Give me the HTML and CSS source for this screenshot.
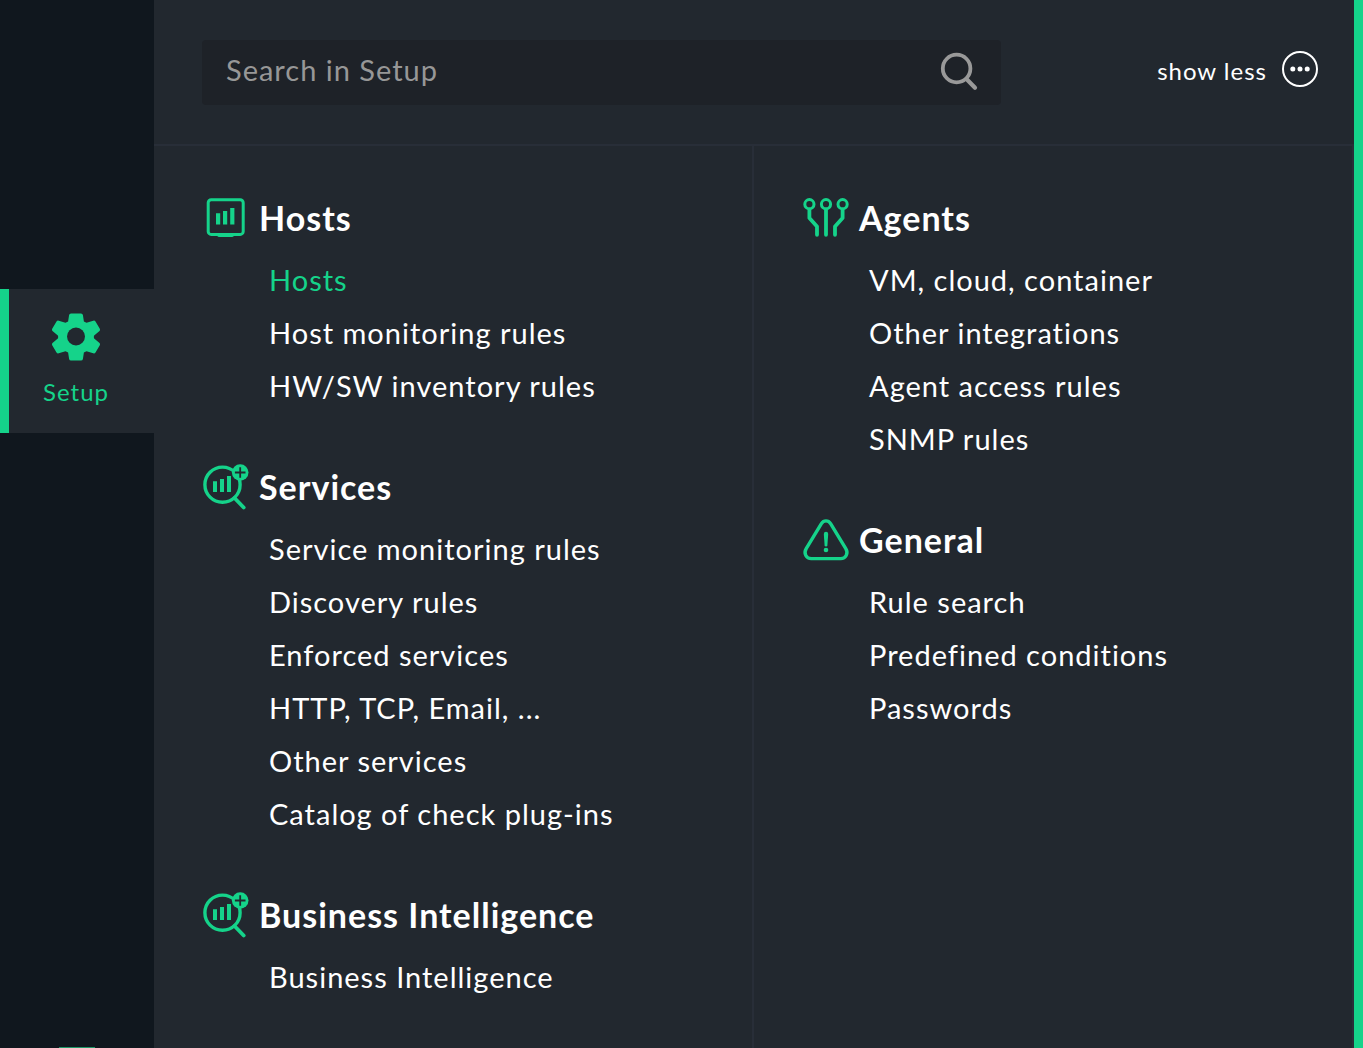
FILE: index.html
```html
<!DOCTYPE html>
<html lang="en">
<head>
<meta charset="utf-8">
<meta name="viewport" content="width=device-width, initial-scale=1">
<title>Setup</title>
<link rel="stylesheet" href="styles.css">
</head>
<body>
<svg class="symbols" aria-hidden="true">
  <symbol id="icon-services" viewBox="0 0 48 48">
    <circle cx="20.500" cy="22.700" r="17.600" fill="none" stroke="currentColor" stroke-width="3.400"/>
    <path d="M32.500 36 41.700 45.500" fill="none" stroke="currentColor" stroke-width="3.800" stroke-linecap="round"/>
    <path d="M11 19.300h4v10.700h-4zM18 17h4v13h-4zM25 14h4v16h-4z" fill="currentColor"/>
    <circle cx="38.200" cy="10.500" r="8.300" fill="currentColor"/>
    <path d="M38.200 5.200v10.600M32.900 10.500h10.600" stroke="#22282f" stroke-width="1.800"/>
  </symbol>
</svg>
<div class="app">
  <nav class="sidebar" aria-label="Main">
    <a class="nav-item" href="#setup" aria-current="page">
      <svg class="nav-icon" viewBox="0 0 50 50" aria-hidden="true">
        <path d="M20 1.500h10q1.600 0 1.900 1.600l1 6.400 2.600 1.300 6.800-2.100q1.400-.4 2.200.8l4.300 7.300q.7 1.200-.3 2.100l-5.600 4.800v2.600l5.600 4.800q1 .9.300 2.100l-4.300 7.300q-.8 1.200-2.200.8l-6.800-2.100-2.600 1.300-1 6.400q-.3 1.600-1.900 1.600H20q-1.600 0-1.900-1.600l-1-6.400-2.600-1.300-6.800 2.100q-1.400.4-2.200-.8l-4.300-7.300q-.7-1.200.3-2.100l5.600-4.800v-2.600l-5.600-4.800q-1-.9-.3-2.100l4.300-7.300q.8-1.200 2.200-.8l6.800 2.100 2.600-1.300 1-6.400q.3-1.600 1.900-1.600z" fill="currentColor"/>
        <circle cx="25" cy="24.500" r="9" fill="#22282f"/>
      </svg>
      <span>Setup</span>
    </a>
    <span class="nav-peek"></span>
  </nav>
  <main class="panel">
    <header class="topbar">
      <form class="search" role="search">
        <input class="search-input" type="search" placeholder="Search in Setup" aria-label="Search in Setup">
        <button class="search-button" type="button" aria-label="Search">
          <svg viewBox="0 0 40 40" aria-hidden="true">
            <circle cx="17.600" cy="16.500" r="13.800" fill="none" stroke="currentColor" stroke-width="3.800"/>
            <path d="m27.500 27 8.500 8.700" fill="none" stroke="currentColor" stroke-width="4.200" stroke-linecap="round"/>
          </svg>
        </button>
      </form>
      <button class="toggle" type="button">
        <span>show less</span>
        <svg viewBox="0 0 38 38" aria-hidden="true">
          <circle cx="19" cy="19" r="17" fill="none" stroke="currentColor" stroke-width="2"/>
          <circle cx="11.800" cy="19" r="2.500" fill="currentColor"/>
          <circle cx="19" cy="19" r="2.500" fill="currentColor"/>
          <circle cx="26.200" cy="19" r="2.500" fill="currentColor"/>
        </svg>
      </button>
    </header>
    <div class="columns">
      <div class="column">
        <section>
          <h2><svg viewBox="0 0 48 48" aria-hidden="true">
            <rect x="6.200" y="6.800" width="35" height="34.600" rx="3" fill="none" stroke="currentColor" stroke-width="3"/>
            <path d="M15.300 41h16.500v1.500q0 1.500-2 1.500H17.300q-2 0-2-1.500z" fill="currentColor"/>
            <path d="M14 20.300h4.200v11.200H14zM21 18h4.200v13.500H21zM28.200 15h4.200v16.500h-4.200z" fill="currentColor"/>
          </svg>Hosts</h2>
          <ul>
            <li><a class="active" href="#hosts">Hosts</a></li>
            <li><a href="#host-rules">Host monitoring rules</a></li>
            <li><a href="#inventory">HW/SW inventory rules</a></li>
          </ul>
        </section>
        <section>
          <h2><svg aria-hidden="true"><use href="#icon-services"/></svg>Services</h2>
          <ul>
            <li><a href="#service-rules">Service monitoring rules</a></li>
            <li><a href="#discovery">Discovery rules</a></li>
            <li><a href="#enforced">Enforced services</a></li>
            <li><a href="#http">HTTP, TCP, Email, ...</a></li>
            <li><a href="#other">Other services</a></li>
            <li><a href="#catalog">Catalog of check plug-ins</a></li>
          </ul>
        </section>
        <section>
          <h2><svg aria-hidden="true"><use href="#icon-services"/></svg>Business Intelligence</h2>
          <ul>
            <li><a href="#bi">Business Intelligence</a></li>
          </ul>
        </section>
      </div>
      <div class="column">
        <section>
          <h2><svg viewBox="0 0 48 48" aria-hidden="true">
            <g fill="none" stroke="currentColor" stroke-width="3">
              <circle cx="7.400" cy="11.200" r="4.600"/><circle cx="24" cy="11.200" r="4.600"/><circle cx="40.600" cy="11.200" r="4.600"/>
              <path d="M7.400 17v8l7.600 8.500v8.300M24 17v24.800M40.600 17v8L33 33.500v8.300" stroke-width="3.800" stroke-linecap="round" stroke-linejoin="round"/>
            </g>
          </svg>Agents</h2>
          <ul>
            <li><a href="#vm">VM, cloud, container</a></li>
            <li><a href="#integrations">Other integrations</a></li>
            <li><a href="#access">Agent access rules</a></li>
            <li><a href="#snmp">SNMP rules</a></li>
          </ul>
        </section>
        <section>
          <h2><svg viewBox="0 0 48 48" aria-hidden="true">
            <path d="M28.600 8.600l15.200 25c3 5-.3 10-5 10H9.200c-4.700 0-8-5-5-10L19.400 8.600c2.300-3.600 6.900-3.600 9.200 0z" fill="none" stroke="currentColor" stroke-width="3.400"/>
            <path d="M21.800 19q0-2.200 2.200-2.200t2.200 2.200l-.8 11.200q-.1 1.300-1.400 1.300t-1.400-1.300z" fill="currentColor"/>
            <circle cx="24" cy="35" r="2.300" fill="currentColor"/>
          </svg>General</h2>
          <ul>
            <li><a href="#search">Rule search</a></li>
            <li><a href="#conditions">Predefined conditions</a></li>
            <li><a href="#passwords">Passwords</a></li>
          </ul>
        </section>
      </div>
    </div>
  </main>
</div>
</body>
</html>
```
FILE: styles.css
```css
* {
  box-sizing: border-box;
}

body {
  margin: 0;
  background: #22282f;
  color: #fff;
  font-family: Lato, "Liberation Sans", sans-serif;
  font-size: 29px;
  letter-spacing: 1px;
}

a,
button,
input {
  color: inherit;
  font: inherit;
  letter-spacing: inherit;
  text-decoration: none;
}

button {
  padding: 0;
  border: 0;
  background: none;
}

.symbols {
  display: none;
}

.app {
  display: flex;
  min-height: 100vh;
  border-right: 9px solid #15d38a;
}

.sidebar {
  display: flex;
  flex-direction: column;
  justify-content: space-between;
  width: 154px;
  padding-top: 289px;
  background: #10171e;
}

.nav-item {
  display: flex;
  flex-direction: column;
  align-items: center;
  gap: 15px;
  height: 144px;
  padding: 23px 11px 0 0;
  border-left: 9px solid #15d38a;
  background: #22282f;
  color: #15d38a;
  font-size: 24px;
}

.nav-icon {
  width: 50px;
  height: 50px;
}

.nav-peek {
  width: 36px;
  height: 1px;
  margin-left: 59px;
  background: #1d9767;
}

.panel {
  display: flex;
  flex: 1;
  flex-direction: column;
}

.topbar {
  display: flex;
  align-items: flex-start;
  justify-content: space-between;
  padding: 40px 35px 39px 48px;
  border-bottom: 2px solid #282e38;
}

.search {
  display: flex;
  align-items: flex-start;
  width: 799px;
  height: 65px;
  padding: 0 22px 0 24px;
  border-radius: 4px;
  background: #1e2228;
}

.search-input {
  flex: 1;
  min-width: 0;
  height: 58px;
  padding: 0;
  border: 0;
  outline: 0;
  background: none;
}

.search-input::placeholder {
  color: #979797;
  opacity: 1;
}

.search-button {
  width: 40px;
  height: 40px;
  margin-top: 12px;
  color: #999;
}

.search-button svg,
.toggle svg {
  display: block;
}

.toggle {
  display: flex;
  align-items: center;
  gap: 14px;
  height: 58px;
  font-size: 24px;
}

.toggle span {
  padding-top: 2px;
}

.toggle svg {
  width: 38px;
  height: 38px;
}

.columns {
  display: grid;
  flex: 1;
  grid-template-columns: 1fr 1fr;
}

.column {
  display: flex;
  flex-direction: column;
  gap: 38px;
  padding: 35px 0 35px 48px;
  border-right: 2px solid #282e38;
}

h2 {
  display: flex;
  align-items: center;
  gap: 9px;
  height: 72px;
  margin: 0;
  font-size: 34px;
  font-weight: 700;
}

h2 svg {
  width: 48px;
  height: 48px;
  color: #15d38a;
}

ul {
  margin: 0;
  padding: 0 0 0 67px;
  list-style: none;
}

li {
  line-height: 53px;
}

.active {
  color: #15d38a;
}
```
